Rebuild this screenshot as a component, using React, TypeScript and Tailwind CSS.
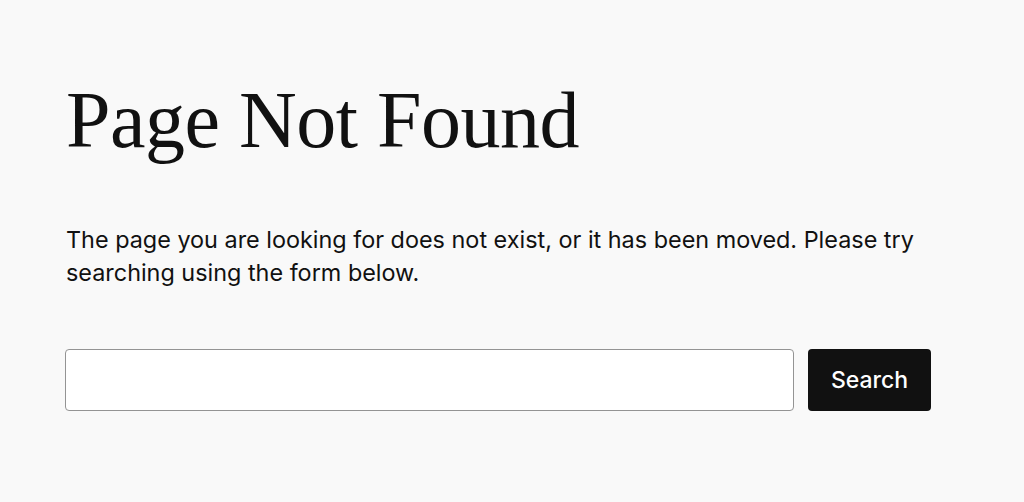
export default function App() {
  return (
    <div className="min-h-[502px] w-full bg-[#f9f9f9] text-[#111111]">
      <div className="px-[66px] pt-[74px]">
        <h1 className="font-['Liberation_Serif',serif] text-[80px] leading-[1.15] font-normal tracking-[-0.5px]">
          Page Not Found
        </h1>
        <p className="mt-[57px] font-['Inter',sans-serif] text-[23.4px] leading-[33px] max-w-[880px]">
          The page you are looking for does not exist, or it has been moved. Please try searching using the form below.
        </p>
        <form className="mt-[60px] -ml-px flex gap-[14px]" onSubmit={(e) => e.preventDefault()}>
          <input
            type="search"
            className="h-[62px] w-[729px] rounded-[4px] border border-[#949494] bg-white px-4 font-['Inter',sans-serif] text-[20px] outline-none"
          />
          <button
            type="submit"
            className="h-[62px] w-[123px] rounded-[4px] bg-[#111111] font-['Inter',sans-serif] text-[23px] font-medium text-white"
          >
            Search
          </button>
        </form>
      </div>
    </div>
  );
}
